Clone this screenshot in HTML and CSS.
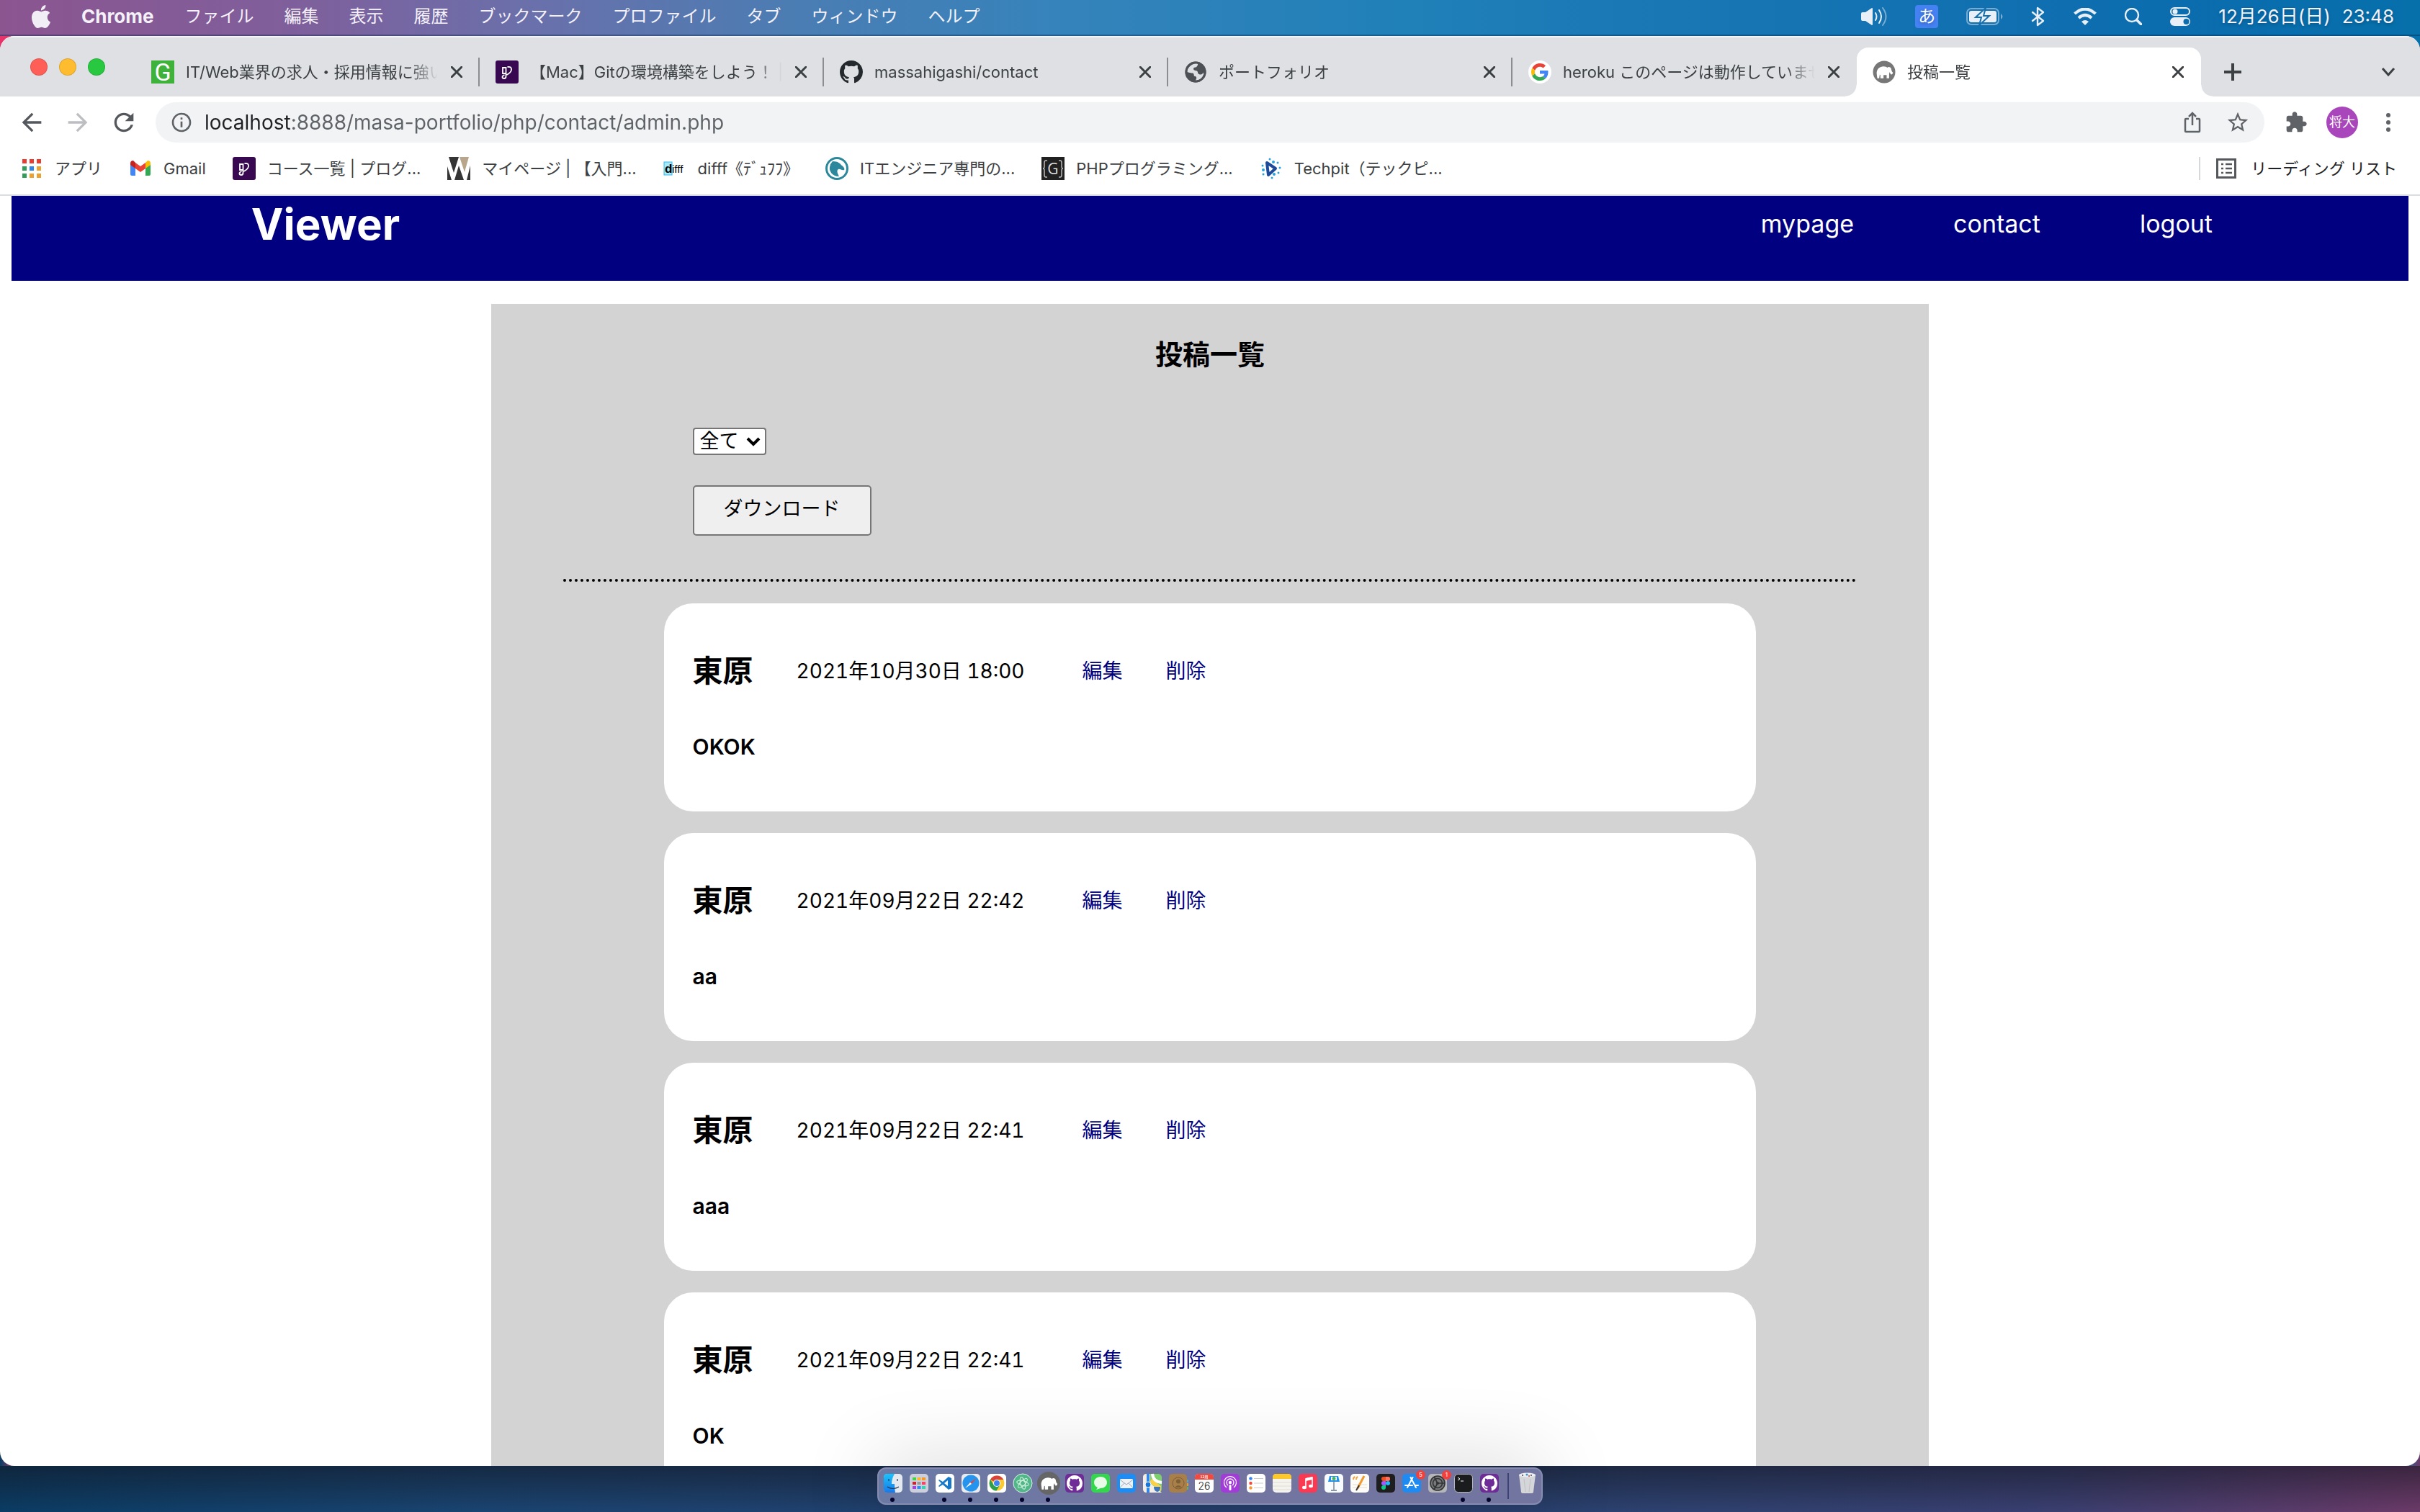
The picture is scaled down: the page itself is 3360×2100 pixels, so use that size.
FILE: index.html
```html
<!DOCTYPE html>
<html lang="ja">
<head>
<meta charset="utf-8">
<title>投稿一覧</title>
<link rel="stylesheet" href="styles.css">
</head>
<body>
<svg class="sprite" aria-hidden="true">
  <symbol id="close" viewBox="0 0 16 16"><path d="M1 1l14 14M15 1L1 15" fill="none" stroke="#3c4043" stroke-width="3" stroke-linecap="round"/></symbol>
  <symbol id="octocat" viewBox="0 0 16 16"><path d="M8 0C3.58 0 0 3.58 0 8c0 3.54 2.29 6.53 5.47 7.59.4.07.55-.17.55-.38 0-.19-.01-.82-.01-1.49-2.01.37-2.53-.49-2.69-.94-.09-.23-.48-.94-.82-1.13-.28-.15-.68-.52-.01-.53.63-.01 1.08.58 1.23.82.72 1.21 1.87.87 2.33.66.07-.52.28-.87.51-1.07-1.78-.2-3.64-.89-3.64-3.95 0-.87.31-1.59.82-2.15-.08-.2-.36-1.02.08-2.12 0 0 .67-.21 2.2.82.64-.18 1.32-.27 2-.27s1.36.09 2 .27c1.53-1.04 2.2-.82 2.2-.82.44 1.1.16 1.92.08 2.12.51.56.82 1.27.82 2.15 0 3.07-1.87 3.75-3.65 3.95.29.25.54.73.54 1.48 0 1.07-.01 1.93-.01 2.2 0 .21.15.46.55.38A8.01 8.01 0 0 0 16 8c0-4.42-3.58-8-8-8z"/></symbol>
  <symbol id="progate" viewBox="0 0 32 32"><rect width="32" height="32" rx="3" fill="#380851"/><path d="M10 10h4.500v8H10zM14.500 10v12q0 3-2.500 3t-2.500-2 3-3M16.500 9q6-1 5.500 4-.5 4-6.500 7" fill="none" stroke="#fff" stroke-width="1.800"/></symbol>
  <symbol id="elephant" viewBox="0 0 30 30"><path d="M3 17c0-7 5-11 11-11 3 0 5 1 6 2 2-2 5-1 6 1 1 3 1 6 3 7 0 3-3 4-4 2l-1-3-1 3v7h-4v-5h-5v5H9v-5l-1-1-1 6H4z"/></symbol>
</svg>

<header class="menubar">
  <nav class="menus" aria-label="メニューバー">
    <svg class="apple" viewBox="2 0 20 24"><path fill="#f2eef5" d="M12.152 6.896c-.948 0-2.415-1.078-3.96-1.04-2.04.027-3.91 1.183-4.961 3.014-2.117 3.675-.546 9.103 1.519 12.09 1.013 1.454 2.208 3.09 3.792 3.039 1.52-.065 2.09-.987 3.935-.987 1.831 0 2.35.987 3.96.948 1.637-.026 2.676-1.48 3.676-2.948 1.156-1.688 1.636-3.325 1.662-3.415-.039-.013-3.182-1.221-3.22-4.857-.026-3.04 2.48-4.494 2.597-4.559-1.429-2.09-3.623-2.324-4.39-2.376-2-.156-3.675 1.09-4.61 1.09zM15.53 3.83c.843-1.012 1.4-2.427 1.245-3.83-1.207.052-2.662.805-3.532 1.818-.78.896-1.454 2.338-1.273 3.714 1.338.104 2.715-.688 3.559-1.701"/></svg>
    <button class="menu app-name">Chrome</button>
    <button class="menu">ファイル</button>
    <button class="menu">編集</button>
    <button class="menu">表示</button>
    <button class="menu">履歴</button>
    <button class="menu">ブックマーク</button>
    <button class="menu">プロファイル</button>
    <button class="menu">タブ</button>
    <button class="menu">ウィンドウ</button>
    <button class="menu">ヘルプ</button>
  </nav>
  <div class="status">
    <svg width="36" height="26" viewBox="0 0 36 26"><path d="M2 7h4l9-6q1 0 1 1v22q0 1-1 1l-9-6H2q-2 0-2-2V9q0-2 2-2z" fill="#e8eff6"/><path d="M20 8q3 5 0 10M25 4q6 9 0 18" fill="none" stroke="#e8eff6" stroke-width="2" stroke-linecap="round"/><path d="M30 1q9 12 0 24" fill="none" stroke="#79acd2" stroke-width="2" stroke-linecap="round"/></svg>
    <span class="ime">あ</span>
    <svg width="51" height="24" viewBox="0 0 51 24"><rect x="1" y="1" width="44" height="22" rx="6" fill="none" stroke="#79acd2" stroke-width="2"/><rect x="4" y="4" width="38" height="16" rx="3" fill="#e8eff6"/><path d="M48 8q5 4 0 8z" fill="#79acd2"/><path d="M27 0L13 13h8l-3 11 14-13h-8z" fill="#e8eff6" stroke="#1270b1" stroke-width="2"/></svg>
    <svg width="20" height="28" viewBox="0 0 20 28"><path d="M2 8l15 12-8 6V2l8 6L2 20" fill="none" stroke="#e8eff6" stroke-width="2.4" stroke-linejoin="round" stroke-linecap="round"/></svg>
    <svg width="32" height="24" viewBox="0 0 32 24"><path d="M1.500 8Q16-5 30.500 8M7 14q9-8 18 0" fill="none" stroke="#e8eff6" stroke-width="4.200"/><path d="M11 19q5-4 10 0l-5 5z" fill="#e8eff6"/></svg>
    <svg width="24" height="24" viewBox="0 0 24 24"><circle cx="10" cy="10" r="9" fill="none" stroke="#e8eff6" stroke-width="2.400"/><path d="M17 17l6 6" stroke="#e8eff6" stroke-width="3.500" stroke-linecap="round"/></svg>
    <svg width="28" height="28" viewBox="0 0 28 28"><rect x="1" y="2" width="26" height="10" rx="5" fill="none" stroke="#e8eff6" stroke-width="2"/><circle cx="7" cy="7" r="3.500" fill="#e8eff6"/><rect y="15" width="28" height="12" rx="6" fill="#e8eff6"/><circle cx="22.500" cy="21" r="4" fill="#0b6cae"/></svg>
    <span class="clock"><span>12月26日(日)</span><span>23:48</span></span>
  </div>
</header>

<div class="browser">
  <div class="tabstrip">
    <div class="lights"><span class="light red"></span><span class="light yellow"></span><span class="light green"></span></div>
    <div class="tab">
      <svg class="fav" viewBox="0 0 32 32"><rect width="32" height="32" fill="#3eb23b"/><text x="16" y="28" text-anchor="middle" class="fav-g">G</text></svg>
      <a class="tab-title" href="#">IT/Web業界の求人・採用情報に強い</a>
      <button class="close" aria-label="タブを閉じる"><svg><use href="#close"/></svg></button>
    </div>
    <div class="tab">
      <svg class="fav"><use href="#progate"/></svg>
      <a class="tab-title" href="#">【Mac】Gitの環境構築をしよう！ |</a>
      <button class="close" aria-label="タブを閉じる"><svg><use href="#close"/></svg></button>
    </div>
    <div class="tab">
      <svg class="fav" fill="#24292e"><use href="#octocat"/></svg>
      <a class="tab-title" href="#">massahigashi/contact</a>
      <button class="close" aria-label="タブを閉じる"><svg><use href="#close"/></svg></button>
    </div>
    <div class="tab">
      <svg class="fav" viewBox="1 1 22 22"><circle cx="12" cy="12" r="10" fill="#4d5156"/><path d="M13 4c2 0 1 2 0 3s-3 0-3 2 4 1 4 3 2 3 4 2 2-2 2-2c0 4-3 8-8 8 2-3 0-4-1-4s0-3-2-3-5-1-5-1c0-4 4-8 9-8z" fill="#dee0e4"/><path d="M12 2a10 10 0 1 0 0 20 10 10 0 0 0 0-20zm0 2a8 8 0 1 1 0 16 8 8 0 0 1 0-16z" fill="#4d5156"/></svg>
      <a class="tab-title" href="#">ポートフォリオ</a>
      <button class="close" aria-label="タブを閉じる"><svg><use href="#close"/></svg></button>
    </div>
    <div class="tab last">
      <svg class="fav" viewBox="-8 -8 64 64"><circle cx="24" cy="24" r="32" fill="#fff"/><path fill="#EA4335" d="M24 9.500c3.540 0 6.710 1.220 9.210 3.600l6.850-6.850C35.900 2.380 30.470 0 24 0 14.620 0 6.510 5.380 2.560 13.220l7.980 6.190C12.430 13.720 17.740 9.500 24 9.500z"/><path fill="#4285F4" d="M46.980 24.550c0-1.570-.15-3.090-.38-4.550H24v9.020h12.940c-.58 2.960-2.260 5.480-4.780 7.180l7.730 6c4.510-4.180 7.090-10.360 7.090-17.650z"/><path fill="#FBBC05" d="M10.530 28.590c-.48-1.450-.76-2.990-.76-4.590s.27-3.140.76-4.590l-7.980-6.190C.92 16.460 0 20.120 0 24c0 3.880.92 7.540 2.560 10.780l7.970-6.190z"/><path fill="#34A853" d="M24 48c6.480 0 11.930-2.130 15.890-5.810l-7.730-6c-2.150 1.450-4.920 2.300-8.160 2.300-6.260 0-11.570-4.220-13.470-9.910l-7.980 6.190C6.510 42.620 14.620 48 24 48z"/></svg>
      <a class="tab-title" href="#">heroku このページは動作していません</a>
      <button class="close" aria-label="タブを閉じる"><svg><use href="#close"/></svg></button>
    </div>
    <div class="tab active">
      <svg class="fav" viewBox="0 0 32 32"><circle cx="16" cy="16" r="15.500" fill="#777"/><use href="#elephant" x="3" y="3" width="26" height="26" fill="#fff"/></svg>
      <a class="tab-title" href="#">投稿一覧</a>
      <button class="close" aria-label="タブを閉じる"><svg><use href="#close"/></svg></button>
    </div>
    <button class="newtab" aria-label="新しいタブ"><svg width="24" height="24" viewBox="0 0 24 24"><path d="M12 0v24M0 12h24" stroke="#3c4043" stroke-width="4"/></svg></button>
    <button class="tabsearch" aria-label="タブを検索"><svg width="20" height="12" viewBox="0 0 20 12"><path d="M2 1l8 9 8-9" fill="none" stroke="#3c4043" stroke-width="3"/></svg></button>
  </div>

  <div class="toolbar">
    <button aria-label="戻る"><svg width="40" height="40" viewBox="0 0 24 24"><path fill="#54585d" d="M20 11H7.830l5.590-5.590L12 4l-8 8 8 8 1.410-1.410L7.830 13H20v-2z"/></svg></button>
    <button aria-label="進む"><svg width="40" height="40" viewBox="0 0 24 24"><path fill="#bcbec1" d="M12 4l-1.410 1.410L16.170 11H4v2h12.170l-5.580 5.590L12 20l8-8z"/></svg></button>
    <button aria-label="再読み込み"><svg width="40" height="40" viewBox="0 0 24 24"><path fill="#54585d" d="M17.650 6.350C16.200 4.900 14.210 4 12 4c-4.420 0-7.990 3.580-7.990 8s3.570 8 7.990 8c3.730 0 6.840-2.550 7.730-6h-2.080c-.82 2.330-3.040 4-5.650 4-3.310 0-6-2.690-6-6s2.690-6 6-6c1.660 0 3.140.69 4.220 1.780L13 11h7V4l-2.350 2.350z"/></svg></button>
    <div class="omnibox">
      <svg width="32" height="32" viewBox="0 0 24 24"><path fill="#5f6368" d="M11 17h2v-6h-2v6zm1-15C6.480 2 2 6.480 2 12s4.480 10 10 10 10-4.480 10-10S17.520 2 12 2zm0 18c-4.410 0-8-3.590-8-8s3.590-8 8-8 8 3.590 8 8-3.590 8-8 8zM11 9h2V7h-2v2z"/></svg>
      <input class="url" aria-label="アドレスバー" value="localhost:8888/masa-portfolio/php/contact/admin.php">
      <button aria-label="共有"><svg width="24" height="30" viewBox="0 0 24 30"><path d="M7 10H3q-1 0-1 1v16q0 1 1 1h18q1 0 1-1V11q0-1-1-1h-4M12 19V3M7 7l5-5 5 5" fill="none" stroke="#5f6368" stroke-width="2.500"/></svg></button>
      <button aria-label="ブックマークに追加"><svg width="34" height="34" viewBox="0 0 24 24"><path fill="#5f6368" d="M22 9.240l-7.190-.62L12 2 9.190 8.630 2 9.240l5.460 4.730L5.820 21 12 17.270 18.180 21l-1.630-7.030L22 9.240zM12 15.400l-3.760 2.270 1-4.280-3.320-2.880 4.380-.38L12 6.100l1.710 4.040 4.380.38-3.320 2.880 1 4.280L12 15.400z"/></svg></button>
    </div>
    <button class="ext" aria-label="拡張機能"><svg width="32" height="32" viewBox="0 0 24 24"><path fill="#5f6368" d="M20.500 11H19V7c0-1.100-.9-2-2-2h-4V3.500C13 2.120 11.880 1 10.500 1S8 2.120 8 3.500V5H4c-1.100 0-1.990.9-1.990 2v3.800H3.500c1.490 0 2.700 1.210 2.700 2.700s-1.210 2.700-2.700 2.700H2V20c0 1.100.9 2 2 2h3.800v-1.500c0-1.490 1.210-2.700 2.700-2.700 1.490 0 2.700 1.210 2.700 2.700V22H17c1.100 0 2-.9 2-2v-4h1.500c1.380 0 2.500-1.120 2.500-2.500S21.880 11 20.500 11z"/></svg></button>
    <button class="avatar">将大</button>
    <button class="more" aria-label="メニュー"><svg width="8" height="28" viewBox="0 0 8 28"><g fill="#5f6368"><circle cx="4" cy="4" r="3"/><circle cx="4" cy="14" r="3"/><circle cx="4" cy="24" r="3"/></g></svg></button>
  </div>

  <nav class="bookmarks" aria-label="ブックマーク">
    <a class="bookmark" href="#"><svg class="fav" viewBox="0 0 32 32"><path fill="#ea3d2f" d="M3 3h6v6H3zM13 3h6v6h-6zM23 3h6v6h-6z"/><path fill="#2f9e57" d="M3 13h6v6H3zM3 23h6v6H3z"/><path fill="#2f86ea" d="M13 13h6v6h-6z"/><path fill="#eda12d" d="M23 13h6v6h-6zM13 23h6v6h-6zM23 23h6v6h-6z"/></svg>アプリ</a>
    <a class="bookmark" href="#"><svg class="fav" viewBox="0 0 32 32"><path fill="#4285f4" d="M2 10v14q0 2 2 2h5V15z"/><path fill="#34a853" d="M30 10v14q0 2-2 2h-5V15z"/><path fill="#fbbc04" d="M23 8v8l7-5V9q0-4-4-4z"/><path fill="#c5221f" d="M2 11V9q0-4 4-4l3 3v8z"/><path fill="#ea4335" d="M9 8l7 5 7-5v8l-7 5-7-5z"/></svg>Gmail</a>
    <a class="bookmark" href="#"><svg class="fav"><use href="#progate"/></svg>コース一覧 | プログ...</a>
    <a class="bookmark" href="#"><svg class="fav" viewBox="0 0 32 32"><rect width="32" height="32" fill="#fff"/><path fill="#353535" d="M2 0h14l-7 22zM0 13l6 19H0zM16 12l7 20H10zM32 12v20h-5z"/><path fill="#b8a68c" d="M17 0h13l-6 21z"/></svg>マイページ | 【入門...</a>
    <a class="bookmark" href="#"><svg class="fav" viewBox="0 0 32 32"><rect x="1" y="7" width="11" height="18" fill="#a5e9fb" stroke="#35b6ea"/><text x="2" y="22" class="fav-d">d</text><text x="12" y="22" class="fav-ifff">ifff</text></svg>difff《ﾃﾞｭﾌﾌ》</a>
    <a class="bookmark" href="#"><svg class="fav" viewBox="0 0 32 32"><circle cx="16" cy="16" r="14.500" fill="#fff" stroke="#2b879b" stroke-width="3"/><path d="M10 6c8 0 10 3 13 6 3 2 4 5 3 6-3 1-6-2-8-1-3 2-1 6 1 10C9 27 5 19 6 14q1-5 4-8z" fill="#2b879b"/></svg>ITエンジニア専門の...</a>
    <a class="bookmark" href="#"><svg class="fav" viewBox="0 0 32 32"><rect width="32" height="32" fill="#212121"/><path d="M8 5H6Q4 5 4 8v5q0 3-2 3 2 0 2 3v6q0 3 2 3h2M24 5h2q2 0 2 3v5q0 3 2 3-2 0-2 3v6q0 3-2 3h-2" fill="none" stroke="#bbb" stroke-width="1.500"/><text x="16" y="24" text-anchor="middle" class="fav-bg">G</text></svg>PHPプログラミング...</a>
    <a class="bookmark" href="#"><svg class="fav" viewBox="0 0 32 32"><path d="M10 8l12 8-10 9z" fill="none" stroke="#1d4b9b" stroke-width="4" stroke-linejoin="round"/><g fill="#24a3dc"><circle cx="14" cy="3" r="1.500"/><circle cx="19" cy="7" r="2"/><circle cx="25" cy="8" r="1.500"/><circle cx="28" cy="15" r="1.500"/><circle cx="26" cy="22" r="1.500"/><circle cx="20" cy="24" r="2"/><circle cx="17" cy="29" r="1.500"/><circle cx="4" cy="12" r="1.500"/><circle cx="5" cy="18" r="2"/><circle cx="5" cy="24" r="1.500"/></g></svg>Techpit（テックピ...</a>
    <button class="reading"><svg width="28" height="28" viewBox="0 0 28 28"><rect x="1.500" y="1.500" width="25" height="25" fill="none" stroke="#54585d" stroke-width="3"/><path d="M7 8h3M13 8h9M7 14h3M13 14h9M7 20h3M13 20h9" stroke="#54585d" stroke-width="2.500"/></svg>リーディング リスト</button>
  </nav>

  <main class="page">
    <header class="site-header">
      <h1 class="logo">Viewer</h1>
      <nav class="site-nav"><a href="#">mypage</a><a href="#">contact</a><a href="#">logout</a></nav>
    </header>
    <section class="panel">
      <h2 class="panel-title">投稿一覧</h2>
      <form class="filters">
        <div class="select-wrap">
          <select class="select" aria-label="絞り込み"><option>全て</option></select>
          <svg class="select-arrow" width="20" height="14" viewBox="0 0 20 14"><path d="M2 2l8 8 8-8" fill="none" stroke="#000" stroke-width="4"/></svg>
        </div>
        <button type="button" class="download">ダウンロード</button>
      </form>
      <div class="posts">
        <article class="post"><div class="post-head"><h3>東原</h3><time>2021年10月30日 18:00</time><a href="#">編集</a><a href="#">削除</a></div><p>OKOK</p></article>
        <article class="post"><div class="post-head"><h3>東原</h3><time>2021年09月22日 22:42</time><a href="#">編集</a><a href="#">削除</a></div><p>aa</p></article>
        <article class="post"><div class="post-head"><h3>東原</h3><time>2021年09月22日 22:41</time><a href="#">編集</a><a href="#">削除</a></div><p>aaa</p></article>
        <article class="post"><div class="post-head"><h3>東原</h3><time>2021年09月22日 22:41</time><a href="#">編集</a><a href="#">削除</a></div><p>OK</p></article>
      </div>
    </section>
  </main>
</div>

<footer class="dock-area">
  <div class="dock">
    <span class="app running"><svg viewBox="0 0 26 26"><defs><linearGradient id="fi" x2="0" y2="1"><stop stop-color="#19c3fb"/><stop offset="1" stop-color="#1a78e8"/></linearGradient></defs><rect width="26" height="26" rx="5" fill="#e4e9f0"/><path d="M5 0h10q-4 7-4 14h4q0 6 1 12H5q-5 0-5-5V5q0-5 5-5z" fill="url(#fi)"/><path d="M7 7v3M19 7v3M5 18q8 5 16 0" fill="none" stroke="#1c3450" stroke-width="1.200"/></svg></span>
    <span class="app"><svg viewBox="0 0 26 26"><rect width="26" height="26" rx="5" fill="#cdd0dc"/><path fill="#3fd447" d="M4 5h5v4H4z"/><path fill="#fbb62c" d="M10.500 5h5v4h-5z"/><path fill="#f59a25" d="M17 5h5v4h-5z"/><path fill="#c9242c" d="M4 11h5v4H4z"/><path fill="#999" d="M10.500 11h5v4h-5z"/><path fill="#f44660" d="M17 11h5v4h-5z"/><path fill="#a743dd" d="M4 17h5v4H4z"/><path fill="#2b8df5" d="M10.500 17h5v4h-5z"/><path fill="#33d6b0" d="M17 17h5v4h-5z"/></svg></span>
    <span class="app running"><svg viewBox="0 0 26 26"><rect width="26" height="26" rx="5" fill="#fff"/><path d="M18 4l4 2v14l-4 2-8-7-5 3-1-1 4-4-4-4 1-1 5 3zM17 9l-5 4 5 4z" fill="#1579c8" fill-rule="evenodd"/></svg></span>
    <span class="app running"><svg viewBox="0 0 26 26"><rect width="26" height="26" rx="5" fill="#e9ebee"/><circle cx="13" cy="13" r="11.500" fill="#2494ee"/><path d="M21 6l-7 8-2-2z" fill="#ef4035"/><path d="M5 20l7-8 2 2z" fill="#fff"/></svg></span>
    <span class="app running"><svg viewBox="0 0 26 26"><rect width="26" height="26" rx="5" fill="#fff"/><circle cx="13" cy="13" r="10.500" fill="#fbc932"/><path d="M13 13L4 8a10.300 10.300 0 0 1 18.300 0H13z" fill="#d9443a"/><path d="M17.300 15.500L12.500 23.500A10.500 10.500 0 0 1 4 7.800l4.700 7.700z" fill="#2d9f50"/><circle cx="13" cy="13" r="5" fill="#fff"/><circle cx="13" cy="13" r="4" fill="#3f83ee"/></svg></span>
    <span class="app running"><svg viewBox="0 0 26 26"><circle cx="13" cy="13" r="13" fill="#52b788" stroke="#dff2e8"/><g fill="none" stroke="#d7f5e4"><ellipse cx="13" cy="13" rx="8.500" ry="3.300" transform="rotate(15 13 13)"/><ellipse cx="13" cy="13" rx="8.500" ry="3.300" transform="rotate(75 13 13)"/><ellipse cx="13" cy="13" rx="8.500" ry="3.300" transform="rotate(135 13 13)"/></g></svg></span>
    <span class="app running"><svg class="large" viewBox="0 0 32 32"><circle cx="16" cy="16" r="16" fill="#666"/><use href="#elephant" x="3" y="3" width="26" height="26" fill="#fff"/></svg></span>
    <span class="app"><svg viewBox="0 0 26 26"><rect width="26" height="26" rx="5" fill="#6f2b96"/><use href="#octocat" x="2" y="2" width="22" height="22" fill="#fff"/></svg></span>
    <span class="app"><svg viewBox="0 0 26 26"><rect width="26" height="26" rx="5" fill="#32d74b"/><path d="M13 4c5 0 9 3.500 9 8s-4 8-9 8l-6 2 2-3q-5-2-5-7c0-4.500 4-8 9-8z" fill="#e8fbe9"/></svg></span>
    <span class="app"><svg viewBox="0 0 26 26"><rect width="26" height="26" rx="5" fill="#1c8df4"/><rect x="4" y="7" width="18" height="13" rx="1" fill="#eef2f6"/><path d="M4 8l9 7 9-7M4 19l6-6M22 19l-6-6" fill="none" stroke="#9aa8b5"/></svg></span>
    <span class="app"><svg viewBox="0 0 26 26"><rect width="26" height="26" rx="5" fill="#7cd16a"/><path d="M0 5q0-5 5-5h5v13L26 26H5q-5 0-5-5z" fill="#f4efe6"/><path d="M9 12L25 24V17L12 7z" fill="#fbd247"/><path d="M7 0v26" stroke="#3086e5" stroke-width="4"/><path d="M13 0q1 11 13 12" fill="none" stroke="#fff" stroke-width="4"/><circle cx="7" cy="15" r="4" fill="#1577e0" stroke="#fff"/><path d="M15 18h9q0 6-4 7-5-1-5-7z" fill="#3d76bd"/></svg></span>
    <span class="app"><svg viewBox="0 0 26 26"><path d="M24 8h3v4h-3z" fill="#5ba6b8"/><path d="M24 13h3v4h-3z" fill="#dd9e3d"/><path d="M24 18h3v4h-3z" fill="#5eb56a"/><rect width="25" height="26" rx="5" fill="#a97f49"/><circle cx="13" cy="13" r="8" fill="none" stroke="#7e5e35"/><circle cx="13" cy="10.500" r="3" fill="#7e5e35"/><path d="M8 19q5-6 10 0z" fill="#7e5e35"/></svg></span>
    <span class="app"><svg viewBox="0 0 26 26"><rect width="26" height="26" rx="5" fill="#fff"/><path d="M5 0h16q5 0 5 5v3H0V5q0-5 5-5z" fill="#f0493f"/><text x="13" y="6" text-anchor="middle" class="cal-month">12月</text><text x="13" y="22" text-anchor="middle" class="cal-day">26</text></svg></span>
    <span class="app"><svg viewBox="0 0 26 26"><rect width="26" height="26" rx="5" fill="#a23bd8"/><g fill="none" stroke="#fff" stroke-width="1.300"><path d="M8 19a8.500 8.500 0 1 1 10 0"/><path d="M10 16a5 5 0 1 1 6 0"/></g><circle cx="13" cy="12" r="2.200" fill="#fff"/><rect x="11.500" y="15" width="3" height="8" rx="1.500" fill="#fff"/></svg></span>
    <span class="app"><svg viewBox="0 0 26 26"><rect width="26" height="26" rx="5" fill="#fff"/><circle cx="5.500" cy="6.500" r="2.200" fill="#3a82f0"/><circle cx="5.500" cy="13" r="2.200" fill="#ef4b40"/><circle cx="5.500" cy="19.500" r="2.200" fill="#f49a35"/><path d="M10 6.500h13M10 13h13M10 19.500h13" stroke="#ccc"/></svg></span>
    <span class="app"><svg viewBox="0 0 26 26"><rect width="26" height="26" rx="5" fill="#f5f3ee"/><path d="M5 0h16q5 0 5 5v2H0V5q0-5 5-5z" fill="#fcc928"/><path d="M0 12h26M0 17h26M0 22h26" stroke="#dedbd4"/></svg></span>
    <span class="app"><svg viewBox="0 0 26 26"><rect width="26" height="26" rx="5" fill="#f93a52"/><path d="M10 18V7l9-2v11" fill="none" stroke="#fff" stroke-width="1.600"/><path d="M10 6l9-2v4l-9 2z" fill="#fff"/><ellipse cx="8" cy="19" rx="3" ry="2.200" fill="#fff"/><ellipse cx="17" cy="17" rx="3" ry="2.200" fill="#fff"/></svg></span>
    <span class="app"><svg viewBox="0 0 26 26"><rect width="26" height="26" rx="5" fill="#f8fbff"/><path d="M7 3h12l2 8H5z" fill="#2492ea"/><rect x="9" y="4" width="8" height="5" fill="#fff"/><circle cx="13" cy="6.500" r="2.500" fill="#45b36a"/><path d="M13 11v11M9 23h8" stroke="#678" stroke-width="1.300"/></svg></span>
    <span class="app"><svg viewBox="0 0 26 26"><rect width="26" height="26" rx="5" fill="#fdfcf8"/><path d="M3 15h20M3 19h20" stroke="#e2ded4"/><path d="M19 3L10 20" stroke="#f29a2e" stroke-width="3"/><path d="M12 16l-4 7" stroke="#333" stroke-width="2"/><path d="M6 4q-2 1-2 4M10 4Q8 5 8 8" stroke="#f2a23a" stroke-width="2" fill="none"/></svg></span>
    <span class="app"><svg viewBox="0 0 26 26"><rect width="26" height="26" rx="5" fill="#1e1e1f"/><rect x="7" y="4" width="12" height="6" rx="3" fill="#f24e1e"/><path d="M13 4h3a3 3 0 0 1 0 6h-3z" fill="#ff7262"/><path d="M10 10h3v6h-3a3 3 0 0 1 0-6z" fill="#a259ff"/><circle cx="16" cy="13" r="3" fill="#1abcfe"/><path d="M10 16h3v3a3 3 0 1 1-3-3z" fill="#0acf83"/></svg></span>
    <span class="app"><svg viewBox="0 0 26 26"><rect width="26" height="26" rx="5" fill="#1e8bf3"/><path d="M14.500 5L7 19M11.500 5L19 19M4 16h10M18 16h4" stroke="#fff" stroke-width="2" stroke-linecap="round"/></svg><b class="badge">5</b></span>
    <span class="app"><svg viewBox="0 0 26 26"><rect width="26" height="26" rx="5" fill="#b4b6b8"/><circle cx="13" cy="13" r="10" fill="#777a7d" stroke="#333" stroke-width="1.600"/><circle cx="13" cy="13" r="6.500" fill="none" stroke="#333" stroke-width="1.600"/><circle cx="13" cy="13" r="2" fill="#333"/><path d="M13 13h10M13 13L8 4M13 13l-5 9" stroke="#333" stroke-width="1.600"/></svg><b class="badge">1</b></span>
    <span class="app running"><svg viewBox="0 0 26 26"><rect x=".5" y=".5" width="25" height="25" rx="5" fill="#1b1c1e" stroke="#b9babc"/><path d="M5 5l3 2-3 2M9 10h4" fill="none" stroke="#fff"/></svg></span>
    <span class="app running"><svg viewBox="0 0 26 26"><rect width="26" height="26" rx="5" fill="#6f2b96"/><use href="#octocat" x="2" y="2" width="22" height="22" fill="#fff"/></svg></span>
    <span class="dock-divider"></span>
    <span class="app"><svg class="large" viewBox="0 0 32 32"><path d="M5 4h23l-3 24q0 2-3 2H11q-3 0-3-2z" fill="#d5d6d9"/><ellipse cx="16.500" cy="4.500" rx="11.500" ry="3" fill="#edeeef"/><g fill="#445"><circle cx="10" cy="5" r="1"/><circle cx="22" cy="5" r="1"/></g><circle cx="16" cy="4" r="1.500" fill="#3a8fd0"/><circle cx="19" cy="6" r="1" fill="#c44"/><path d="M12 10l2 18M21 10l-2 18" stroke="#bfc1c5"/></svg></span>
  </div>
</footer>
</body>
</html>
```
FILE: styles.css
```css
* { box-sizing: border-box; }

body {
  margin: 0;
  height: 100vh;
  display: flex;
  flex-direction: column;
  overflow: hidden;
  font-family: Inter, "Noto Sans CJK JP", sans-serif;
  font-size: 22px;
  line-height: 32px;
  color: #3c4043;
  background: linear-gradient(90deg, #e8336a 650px, #2a7fb0 651px, #0670ab);
}

button, input, select {
  margin: 0;
  padding: 0;
  border: 0;
  background: none;
  font: inherit;
  color: inherit;
}

a { color: inherit; text-decoration: none; }
svg { display: block; flex: none; }
.sprite { position: absolute; width: 0; height: 0; }

/* macOS menu bar */
.menubar {
  height: 50px;
  flex: none;
  display: flex;
  justify-content: space-between;
  align-items: center;
  padding: 0 36px 2px 43px;
  color: #f4f1f8;
  font-size: 24px;
  background: linear-gradient(90deg, #8b5590, #7f5f9b 12%, #6a70ab 22%, #4a7db3 33%, #3583bb 44%, #2080b8 58%, #1775b3 72%, #0b6cae 90%, #0670ab);
  border-bottom: 2px solid rgba(0, 30, 70, .35);
  text-shadow: 0 2px 4px rgba(0, 0, 0, .25);
}
.menus { display: flex; align-items: center; gap: 42px; white-space: nowrap; }
.apple { width: 28px; height: 32px; }
.menu.app-name { font-size: 26px; font-weight: 700; margin-right: 1px; }
.status { display: flex; align-items: center; gap: 39px; }
.ime {
  width: 32px;
  height: 32px;
  border-radius: 4px;
  background: #4581f3;
  color: #fff;
  text-align: center;
}
.clock { display: flex; gap: 16px; font-size: 26px; }

/* Browser window */
.browser {
  flex: 1;
  min-height: 0;
  display: flex;
  flex-direction: column;
  overflow: hidden;
  border-radius: 20px;
  background: #fff;
}
.tabstrip {
  height: 84px;
  flex: none;
  display: flex;
  align-items: flex-end;
  padding-left: 42px;
  background: #dee0e4;
  border-top: 2px solid #f3f4f5;
}
.lights { display: flex; gap: 16px; width: 146px; padding-bottom: 29px; }
.light { width: 24px; height: 24px; border-radius: 50%; border: 1px solid rgba(0, 0, 0, .12); }
.red { background: #ff5f57; }
.yellow { background: #febc2e; }
.green { background: #28c840; }
.tab {
  position: relative;
  width: 478px;
  height: 68px;
  display: flex;
  align-items: center;
  padding: 0 24px 0 22px;
}
.tab:not(.active):not(.last)::after {
  content: "";
  position: absolute;
  right: 0;
  top: 14px;
  width: 2px;
  height: 40px;
  background: #8b8d91;
}
.tab.active { background: #fff; border-radius: 16px 16px 0 0; }
.tab.active::before, .tab.active::after {
  content: "";
  position: absolute;
  bottom: 0;
  width: 16px;
  height: 16px;
}
.tab.active::before { right: 100%; background: radial-gradient(circle at 0 0, transparent 15px, #fff 16px); }
.tab.active::after { left: 100%; background: radial-gradient(circle at 100% 0, transparent 15px, #fff 16px); }
.fav { width: 32px; height: 32px; overflow: visible; }
.fav-g { font: 34px Roboto, sans-serif; fill: #fff; }
.fav-bg { font: 21px "Open Sans", sans-serif; fill: #ddd; }
.fav-d { font: bold 17px "Liberation Sans", sans-serif; fill: #000; }
.fav-ifff { font: 15px "Liberation Sans", sans-serif; fill: #000; }
.tab-title {
  flex: 1;
  min-width: 0;
  margin: 0 18px 0 16px;
  overflow: hidden;
  white-space: nowrap;
  -webkit-mask-image: linear-gradient(90deg, #000 calc(100% - 40px), transparent);
  mask-image: linear-gradient(90deg, #000 calc(100% - 40px), transparent);
}
.close, .close svg { width: 16px; height: 16px; }
.newtab { margin: 0 0 22px 32px; }
.tabsearch { margin: 0 34px 28px auto; }

.toolbar {
  height: 72px;
  flex: none;
  display: flex;
  align-items: center;
  gap: 24px;
  padding: 0 40px 0 24px;
}
.omnibox {
  flex: 1;
  height: 56px;
  display: flex;
  align-items: center;
  gap: 34px;
  padding: 0 20px;
  border-radius: 28px;
  background: #f1f3f4;
}
.url {
  flex: 1;
  margin-left: -18px;
  font-size: 28px;
  color: transparent;
  background: linear-gradient(90deg, #202124 121px, #5f6368 121px);
  -webkit-background-clip: text;
  background-clip: text;
}
.ext { margin-left: 4px; }
.avatar {
  width: 44px;
  height: 44px;
  margin-left: 2px;
  border-radius: 50%;
  background: #aa46bb;
  color: #fff;
  font-size: 18px;
}
.more { margin-left: 14px; }

.bookmarks {
  height: 66px;
  flex: none;
  display: flex;
  align-items: center;
  gap: 37px;
  padding: 0 32px 8px 28px;
  white-space: nowrap;
  border-bottom: 2px solid #dcdddf;
}
.bookmark, .reading { display: flex; align-items: center; gap: 16px; }
.reading {
  margin-left: auto;
  padding-left: 22px;
  height: 32px;
  gap: 20px;
  color: #202124;
  border-left: 2px solid #d6d8da;
}

/* Page */
.page {
  flex: 1;
  min-height: 0;
  overflow: hidden;
  padding: 0 16px;
  color: #000;
  font-size: 28px;
}
.site-header {
  display: flex;
  justify-content: space-between;
  height: 118px;
  padding: 0 272px 0 10%;
  background: navy;
  color: #fff;
}
.logo { margin: 0; font-size: 60px; font-weight: 700; line-height: 78px; }
.site-nav { display: flex; gap: 138px; font-size: 34px; line-height: 78px; }
.panel {
  width: 60%;
  margin: 32px auto 0;
  padding: 0 100px;
  background: #d3d3d3;
}
.panel-title {
  margin: 0;
  padding-top: 42px;
  text-align: center;
  font-size: 38px;
  font-weight: 700;
  line-height: 56px;
}
.filters {
  display: flex;
  flex-direction: column;
  align-items: flex-start;
  gap: 42px;
  padding: 74px 180px 60px;
  border-bottom: 4px dotted #000;
  font-size: 27px;
}
.select-wrap { position: relative; }
.select {
  display: block;
  width: 102px;
  height: 38px;
  padding-left: 8px;
  appearance: none;
  border: 2px solid #767676;
  border-radius: 4px;
  background: #fff;
}
.select-arrow { position: absolute; right: 8px; top: 13px; pointer-events: none; }
.download {
  height: 70px;
  padding: 0 41px 4px;
  border: 2px solid #767676;
  border-radius: 5px;
  background: #efefef;
}
.posts { display: flex; flex-direction: column; gap: 30px; padding: 30px 140px; }
.post { padding: 66px 40px; border-radius: 40px; background: #fff; }
.post-head { display: flex; align-items: center; gap: 60px; height: 56px; color: navy; }
.post h3 { margin: 0; font-size: 42px; font-weight: 700; line-height: 56px; color: #000; }
.post time { margin-right: 20px; color: #000; font-variant-numeric: tabular-nums; }
.post p { margin: 53px 0 0; font-size: 30px; font-weight: 600; line-height: 48px; }

/* Dock */
.dock-area {
  position: relative;
  height: 64px;
  flex: none;
  display: flex;
  justify-content: center;
  align-items: flex-start;
  padding-top: 2px;
  background:
    linear-gradient(rgba(18, 20, 30, .55), transparent),
    linear-gradient(90deg, #0b3c64, #1a4471 20%, #24406e 45%, #2b4270 65%, #3a3f70 85%, #6b3a68);
}
.dock-area::before {
  content: "";
  position: absolute;
  inset: -20px 0 100%;
  z-index: -1;
  background: linear-gradient(90deg, #0b3c64, transparent 30px calc(100% - 30px), #6b3a68);
}
.dock {
  position: relative;
  display: flex;
  height: 52px;
  padding: 0 2px;
  border: 2px solid #868bb0;
  border-radius: 12px;
  background: linear-gradient(90deg, #6a7aa5, #7375a0 45%, #71759f);
  box-shadow: 0 0 110px rgba(0, 0, 0, .22);
}
.app { position: relative; display: flex; width: 36px; height: 40px; justify-content: center; align-items: center; }
.app svg { width: 26px; height: 26px; overflow: visible; }
.app svg.large { width: 32px; height: 32px; }
.running::after {
  content: "";
  position: absolute;
  left: 14px;
  top: 40px;
  width: 6px;
  height: 6px;
  border-radius: 50%;
  background: #04042c;
}
.badge {
  position: absolute;
  right: -1px;
  top: 2px;
  width: 13px;
  height: 13px;
  border-radius: 50%;
  background: #f0413c;
  color: #fff;
  font-size: 8px;
  font-weight: 400;
  line-height: 13px;
  text-align: center;
}
.dock-divider { width: 2px; height: 36px; margin: 6px 7px; background: #3c4273; }
.cal-month { font: 700 5px "Noto Sans CJK JP", sans-serif; fill: #fff; }
.cal-day { font: 300 14px Inter, sans-serif; fill: #222; }
```
